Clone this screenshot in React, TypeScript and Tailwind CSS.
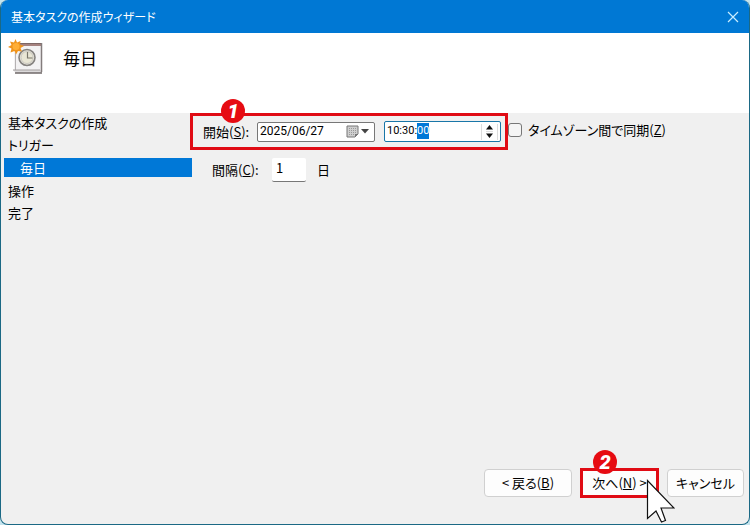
import { useEffect, useRef } from "react"
import type { ReactNode } from "react"

const steps = [
  { label: "基本タスクの作成" },
  { label: "トリガー" },
  { label: "毎日", active: true },
  { label: "操作" },
  { label: "完了" },
]

function TaskIcon() {
  return (
    <svg width="36" height="36" viewBox="0 0 36 36" aria-hidden="true">
      <path d="M6 6h28v25H6z" fill="#f3f2f3" />
      <path d="M5 31h29v3H8z" fill="#dcdadb" />
      <path d="M10 4h24v3H10z" fill="#a5827f" />
      <path d="M10 4.500h24" stroke="#7d6664" />
      <path d="M7.500 14v17" stroke="#b5b2b3" />
      <path d="M33.500 4v29" stroke="#837c7c" strokeWidth="1.500" />
      <path d="M7 34h27" stroke="#6f6969" strokeWidth="1.500" />
      <path d="M5 31h27" stroke="#a39f9f" />
      <circle cx="19" cy="18.500" r="8" fill="#e4e2d8" stroke="#85827f" strokeWidth="1.600" />
      <circle cx="19" cy="18.500" r="6" fill="#e9e6d5" stroke="#cbc8c0" />
      <path d="M19.500 13v6h5" fill="none" stroke="#7b776c" strokeWidth="1.200" />
      <path
        d="M7.500 0l1.500 3.500L12.500 2l-.500 3.500 4 1.500-3.500 2 1.500 3.500-4-.500L8 15.500 6.500 12 2.500 13.500l1-4L0 8l3.500-2L2 2.500l4 1z"
        fill="#f0941c"
      />
      <circle cx="8" cy="7.500" r="3.500" fill="#ffae35" />
    </svg>
  )
}

function Badge({ className, children }: { className: string; children: ReactNode }) {
  return (
    <span
      className={`absolute z-10 flex size-6 items-center justify-center rounded-full bg-[#e60b12] font-[Roboto,sans-serif] text-[20px] leading-6 font-black text-white italic ${className}`}
    >
      {children}
    </span>
  )
}

function Cursor() {
  return (
    <svg className="pointer-events-none absolute top-[9px] left-[63px] z-10" width="32" height="46" viewBox="0 0 32 46" aria-hidden="true">
      <path d="M4.500 3.500v38l8.500-7.500 5.500 11 4-1.500-4.500-12.500h13z" fill="#fff" stroke="#111" strokeWidth="1.200" />
    </svg>
  )
}

export default function App() {
  const timeRef = useRef<HTMLInputElement>(null)

  useEffect(() => {
    timeRef.current?.focus()
    timeRef.current?.setSelectionRange(6, 8)
  }, [])

  return (
    <div className="min-h-screen bg-[#c5e4ee] font-['Noto_Sans_CJK_JP',sans-serif] text-[13px] text-black [font-feature-settings:'palt']">
      <div className="flex min-h-screen flex-col overflow-hidden rounded-lg border border-t-0 border-[#1b6985] bg-[#f0f0f0]">
        <div className="flex h-[33px] items-center justify-between bg-[#0078d4] pr-[10px] pl-[10px] text-white">
          <span className="text-xs leading-5">基本タスクの作成ウィザード</span>
          <button aria-label="閉じる">
            <svg width="12" height="12" viewBox="0 0 12 12">
              <path d="M1 1l10 10M11 1L1 11" stroke="#c9eeff" strokeWidth="1.200" />
            </svg>
          </button>
        </div>

        <header className="flex h-20 items-start bg-white pt-[6px] pl-[7px]">
          <TaskIcon />
          <h1 className="ml-[19px] pt-[7px] text-[17px] leading-6">毎日</h1>
        </header>

        <div className="flex flex-1">
          <ol className="flex w-[191px] shrink-0 flex-col gap-[3px] pl-[3px]">
            {steps.map((step) => (
              <li
                key={step.label}
                className={
                  step.active
                    ? "my-px bg-[#0078d7] pl-4 leading-[19px] text-white"
                    : "pl-1 leading-[19px]"
                }
              >
                {step.label}
              </li>
            ))}
          </ol>

          <main className="-ml-0.5 flex flex-1 flex-col items-start">
            <div className="flex items-center">
              <div className="relative flex h-[37px] items-center border-[3px] border-[#e00b14] pr-1 pl-[10px]">
                <Badge className="-top-[17px] left-7">1</Badge>
                <label htmlFor="start-date" className="w-[54px] leading-5">
                  開始(<u>S</u>):
                </label>
                <div className="flex h-5 w-[118px] items-center rounded-xs border border-[#777] bg-white pr-1 pl-[2px]">
                  <input
                    id="start-date"
                    defaultValue="2025/06/27"
                    className="w-[86px] pb-px font-[Roboto,sans-serif] text-xs leading-4 outline-none"
                  />
                  <button aria-label="カレンダー" className="flex items-center gap-[2px]">
                    <svg width="13" height="13" viewBox="0 0 13 13">
                      <path d="M1 1h11v8l-3 3H1z" fill="#cfcfcf" stroke="#777" />
                      <path d="M3 3.500h7M3 5.500h7M3 7.500h7M3 9.500h5" stroke="#999" strokeDasharray="1 1" />
                      <path d="M9 12V9h3z" fill="#777" />
                    </svg>
                    <svg width="8" height="5" viewBox="0 0 8 5">
                      <path d="M0 0h8L4 4.500z" fill="#444" />
                    </svg>
                  </button>
                </div>
                <div className="ml-[9px] flex h-[21px] w-[117px] items-center rounded-xs border border-[#1976a8] bg-white pr-[2px] pl-[2px]">
                  <input
                    ref={timeRef}
                    aria-label="開始時刻"
                    defaultValue="10:30:00"
                    className="w-0 flex-1 pb-px font-[Roboto,sans-serif] text-[11px] leading-4 outline-none selection:bg-[#0078d7] selection:text-white"
                  />
                  <div className="flex flex-col items-center border-x border-[#dcdcdc] px-1">
                    <button aria-label="増やす" className="flex h-2 items-center border-b border-[#ddd]">
                      <svg width="7" height="5" viewBox="0 0 7 5">
                        <path d="M0 4.500h7L3.500 0z" fill="#111" />
                      </svg>
                    </button>
                    <button aria-label="減らす" className="flex h-2 items-center">
                      <svg width="7" height="5" viewBox="0 0 7 5">
                        <path d="M0 .5h7L3.500 5z" fill="#111" />
                      </svg>
                    </button>
                  </div>
                </div>
              </div>
              <label className="flex items-center gap-[6px] pb-1 leading-5">
                <input type="checkbox" className="size-[14px] appearance-none rounded-[3px] border border-[#777] bg-[#f5f5f5]" />
                <span>
                  タイムゾーン間で同期(<u>Z</u>)
                </span>
              </label>
            </div>

            <div className="mt-2 flex items-center pl-[22px]">
              <label htmlFor="interval" className="w-[60px] leading-5">
                間隔(<u>C</u>):
              </label>
              <input
                id="interval"
                defaultValue="1"
                className="h-6 w-[34px] rounded-xs border-b border-[#777] bg-white px-1 pb-1 leading-5 outline-none"
              />
              <span className="ml-[11px] leading-5">日</span>
            </div>
          </main>
        </div>

        <footer className="flex items-center justify-end gap-2 pr-[5px] pb-[26px]">
          <button className="h-7 w-22 rounded-sm border border-[#d0d0d0] bg-[#fdfdfd] leading-5">
            &lt; 戻る(<u>B</u>)
          </button>
          <div className="relative">
            <Badge className="-top-[18px] left-[13px]">2</Badge>
            <button className="h-[30px] w-[79px] border-[3px] border-[#e00b14] bg-[#fdfdfd] leading-5 whitespace-nowrap">
              次へ(<u>N</u>) &gt;
            </button>
            <Cursor />
          </div>
          <button className="h-7 w-[77px] rounded-sm border border-[#d0d0d0] bg-[#fdfdfd] leading-5">キャンセル</button>
        </footer>
      </div>
    </div>
  )
}
